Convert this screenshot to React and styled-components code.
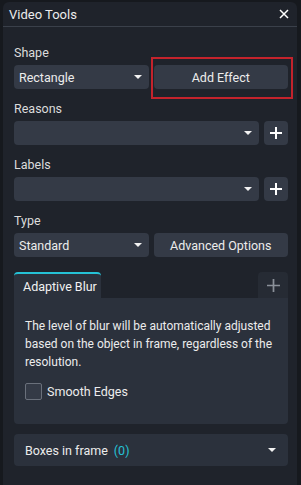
import React from "react";
import styled, { createGlobalStyle } from "styled-components";

const GlobalStyle = createGlobalStyle`
  html, body {
    margin: 0;
    background: #16191e;
    font-family: Roboto, "Liberation Sans", sans-serif;
    -webkit-font-smoothing: antialiased;
  }
`;

const Panel = styled.div`
  margin: 2px 4px 0 3px;
  height: 483px;
  background: #1f232b;
  border-radius: 6px 6px 0 0;
  display: flex;
  flex-direction: column;
`;

const Header = styled.div`
  height: 24px;
  padding: 0 6px;
  display: flex;
  align-items: center;
  justify-content: space-between;
  border-bottom: 1px solid #3a404a;
  color: #ececec;
  font-size: 13px;
`;

const CloseBtn = styled.button`
  border: none;
  background: none;
  padding: 0;
  width: 14px;
  height: 14px;
  display: flex;
  align-items: center;
  justify-content: center;
  cursor: pointer;
`;

const Body = styled.div`
  padding: 18px 9px 0 11px;
  display: flex;
  flex-direction: column;
  gap: 12px;
`;

const Field = styled.div`
  display: flex;
  flex-direction: column;
  gap: 4px;
`;

const Label = styled.div`
  color: #dcdcdc;
  font-size: 12.5px;
  line-height: 16px;
`;

const Row = styled.div`
  display: grid;
  grid-template-columns: ${(p) => (p.$split ? "1fr 1fr" : "1fr 24px")};
  gap: 5px;
`;

const Select = styled.div`
  height: 24px;
  background: #343a46;
  border-radius: 4px;
  display: flex;
  align-items: center;
  justify-content: space-between;
  padding: 0 7px 0 5px;
  color: #ececec;
  font-size: 12.5px;
`;

const Caret = styled.span`
  width: 0;
  height: 0;
  border-left: 4px solid transparent;
  border-right: 4px solid transparent;
  border-top: 4px solid #f2f2f2;
`;

const Button = styled.button`
  position: relative;
  height: 24px;
  border: none;
  background: #343a46;
  border-radius: 4px;
  color: #ececec;
  font-family: inherit;
  font-size: 12.5px;
  padding: 0;
  cursor: pointer;
`;

const Highlight = styled.span`
  position: absolute;
  top: -8px;
  left: -3px;
  right: -5px;
  bottom: -10px;
  border: 2px solid #c4232c;
  pointer-events: none;
`;

const IconButton = styled(Button)`
  display: flex;
  align-items: center;
  justify-content: center;
`;

const Tabs = styled.div`
  margin-top: 3px;
`;

const TabBar = styled.div`
  display: flex;
  justify-content: space-between;
  height: 26px;
`;

const Tab = styled.div`
  width: 87px;
  box-sizing: border-box;
  background: #2b313c;
  border-top: 2px solid #25c2d6;
  border-radius: 4px 4px 0 0;
  color: #f2f2f2;
  font-size: 12.5px;
  white-space: nowrap;
  display: flex;
  align-items: center;
  padding-left: 9px;
`;

const TabAdd = styled.div`
  width: 30px;
  background: #262b34;
  border-radius: 4px 4px 0 0;
  display: flex;
  align-items: center;
  justify-content: center;
`;

const TabContent = styled.div`
  background: #2b313c;
  border-radius: 0 0 4px 4px;
  padding: 19px 8px 24px 11px;
`;

const Description = styled.p`
  margin: 0;
  color: #ececec;
  font-size: 12px;
  line-height: 18px;
`;

const CheckRow = styled.label`
  margin-top: 12px;
  display: flex;
  align-items: center;
  gap: 5px;
  color: #ececec;
  font-size: 12.5px;
`;

const Checkbox = styled.span`
  width: 15px;
  height: 15px;
  border: 1px solid #6a707b;
  border-radius: 2px;
  background: #343a46;
`;

const Accordion = styled.div`
  margin-top: -2px;
  height: 32px;
  background: #2b313c;
  border-radius: 4px;
  display: flex;
  align-items: center;
  justify-content: space-between;
  padding: 0 12px 0 11px;
  color: #ececec;
  font-size: 12.5px;
`;

const Count = styled.span`
  color: #25c2d6;
  margin-left: 6px;
`;

const Plus = ({ size = 12, color = "#ffffff", width = 2 }) => (
  <svg width={size} height={size} viewBox="0 0 12 12">
    <path d="M6 0V12M0 6H12" stroke={color} strokeWidth={width} />
  </svg>
);

export default function App() {
  return (
    <>
      <GlobalStyle />
      <Panel>
        <Header>
          <span>Video Tools</span>
          <CloseBtn>
            <svg width="10" height="10" viewBox="0 0 10 10">
              <path d="M1 1L9 9M9 1L1 9" stroke="#ffffff" strokeWidth="1.5" />
            </svg>
          </CloseBtn>
        </Header>
        <Body>
          <Field>
            <Label>Shape</Label>
            <Row $split>
              <Select>
                Rectangle
                <Caret />
              </Select>
              <Button>
                Add Effect
                <Highlight />
              </Button>
            </Row>
          </Field>
          <Field>
            <Label>Reasons</Label>
            <Row>
              <Select>
                <span />
                <Caret />
              </Select>
              <IconButton>
                <Plus />
              </IconButton>
            </Row>
          </Field>
          <Field>
            <Label>Labels</Label>
            <Row>
              <Select>
                <span />
                <Caret />
              </Select>
              <IconButton>
                <Plus />
              </IconButton>
            </Row>
          </Field>
          <Field>
            <Label>Type</Label>
            <Row $split>
              <Select>
                Standard
                <Caret />
              </Select>
              <Button>Advanced Options</Button>
            </Row>
          </Field>
          <Tabs>
            <TabBar>
              <Tab>Adaptive Blur</Tab>
              <TabAdd>
                <Plus size={13} color="#8a9099" width={1.6} />
              </TabAdd>
            </TabBar>
            <TabContent>
              <Description>
                The level of blur will be automatically adjusted based on the
                object in frame, regardless of the resolution.
              </Description>
              <CheckRow>
                <Checkbox />
                Smooth Edges
              </CheckRow>
            </TabContent>
          </Tabs>
          <Accordion>
            <span>
              Boxes in frame<Count>(0)</Count>
            </span>
            <Caret />
          </Accordion>
        </Body>
      </Panel>
    </>
  );
}
